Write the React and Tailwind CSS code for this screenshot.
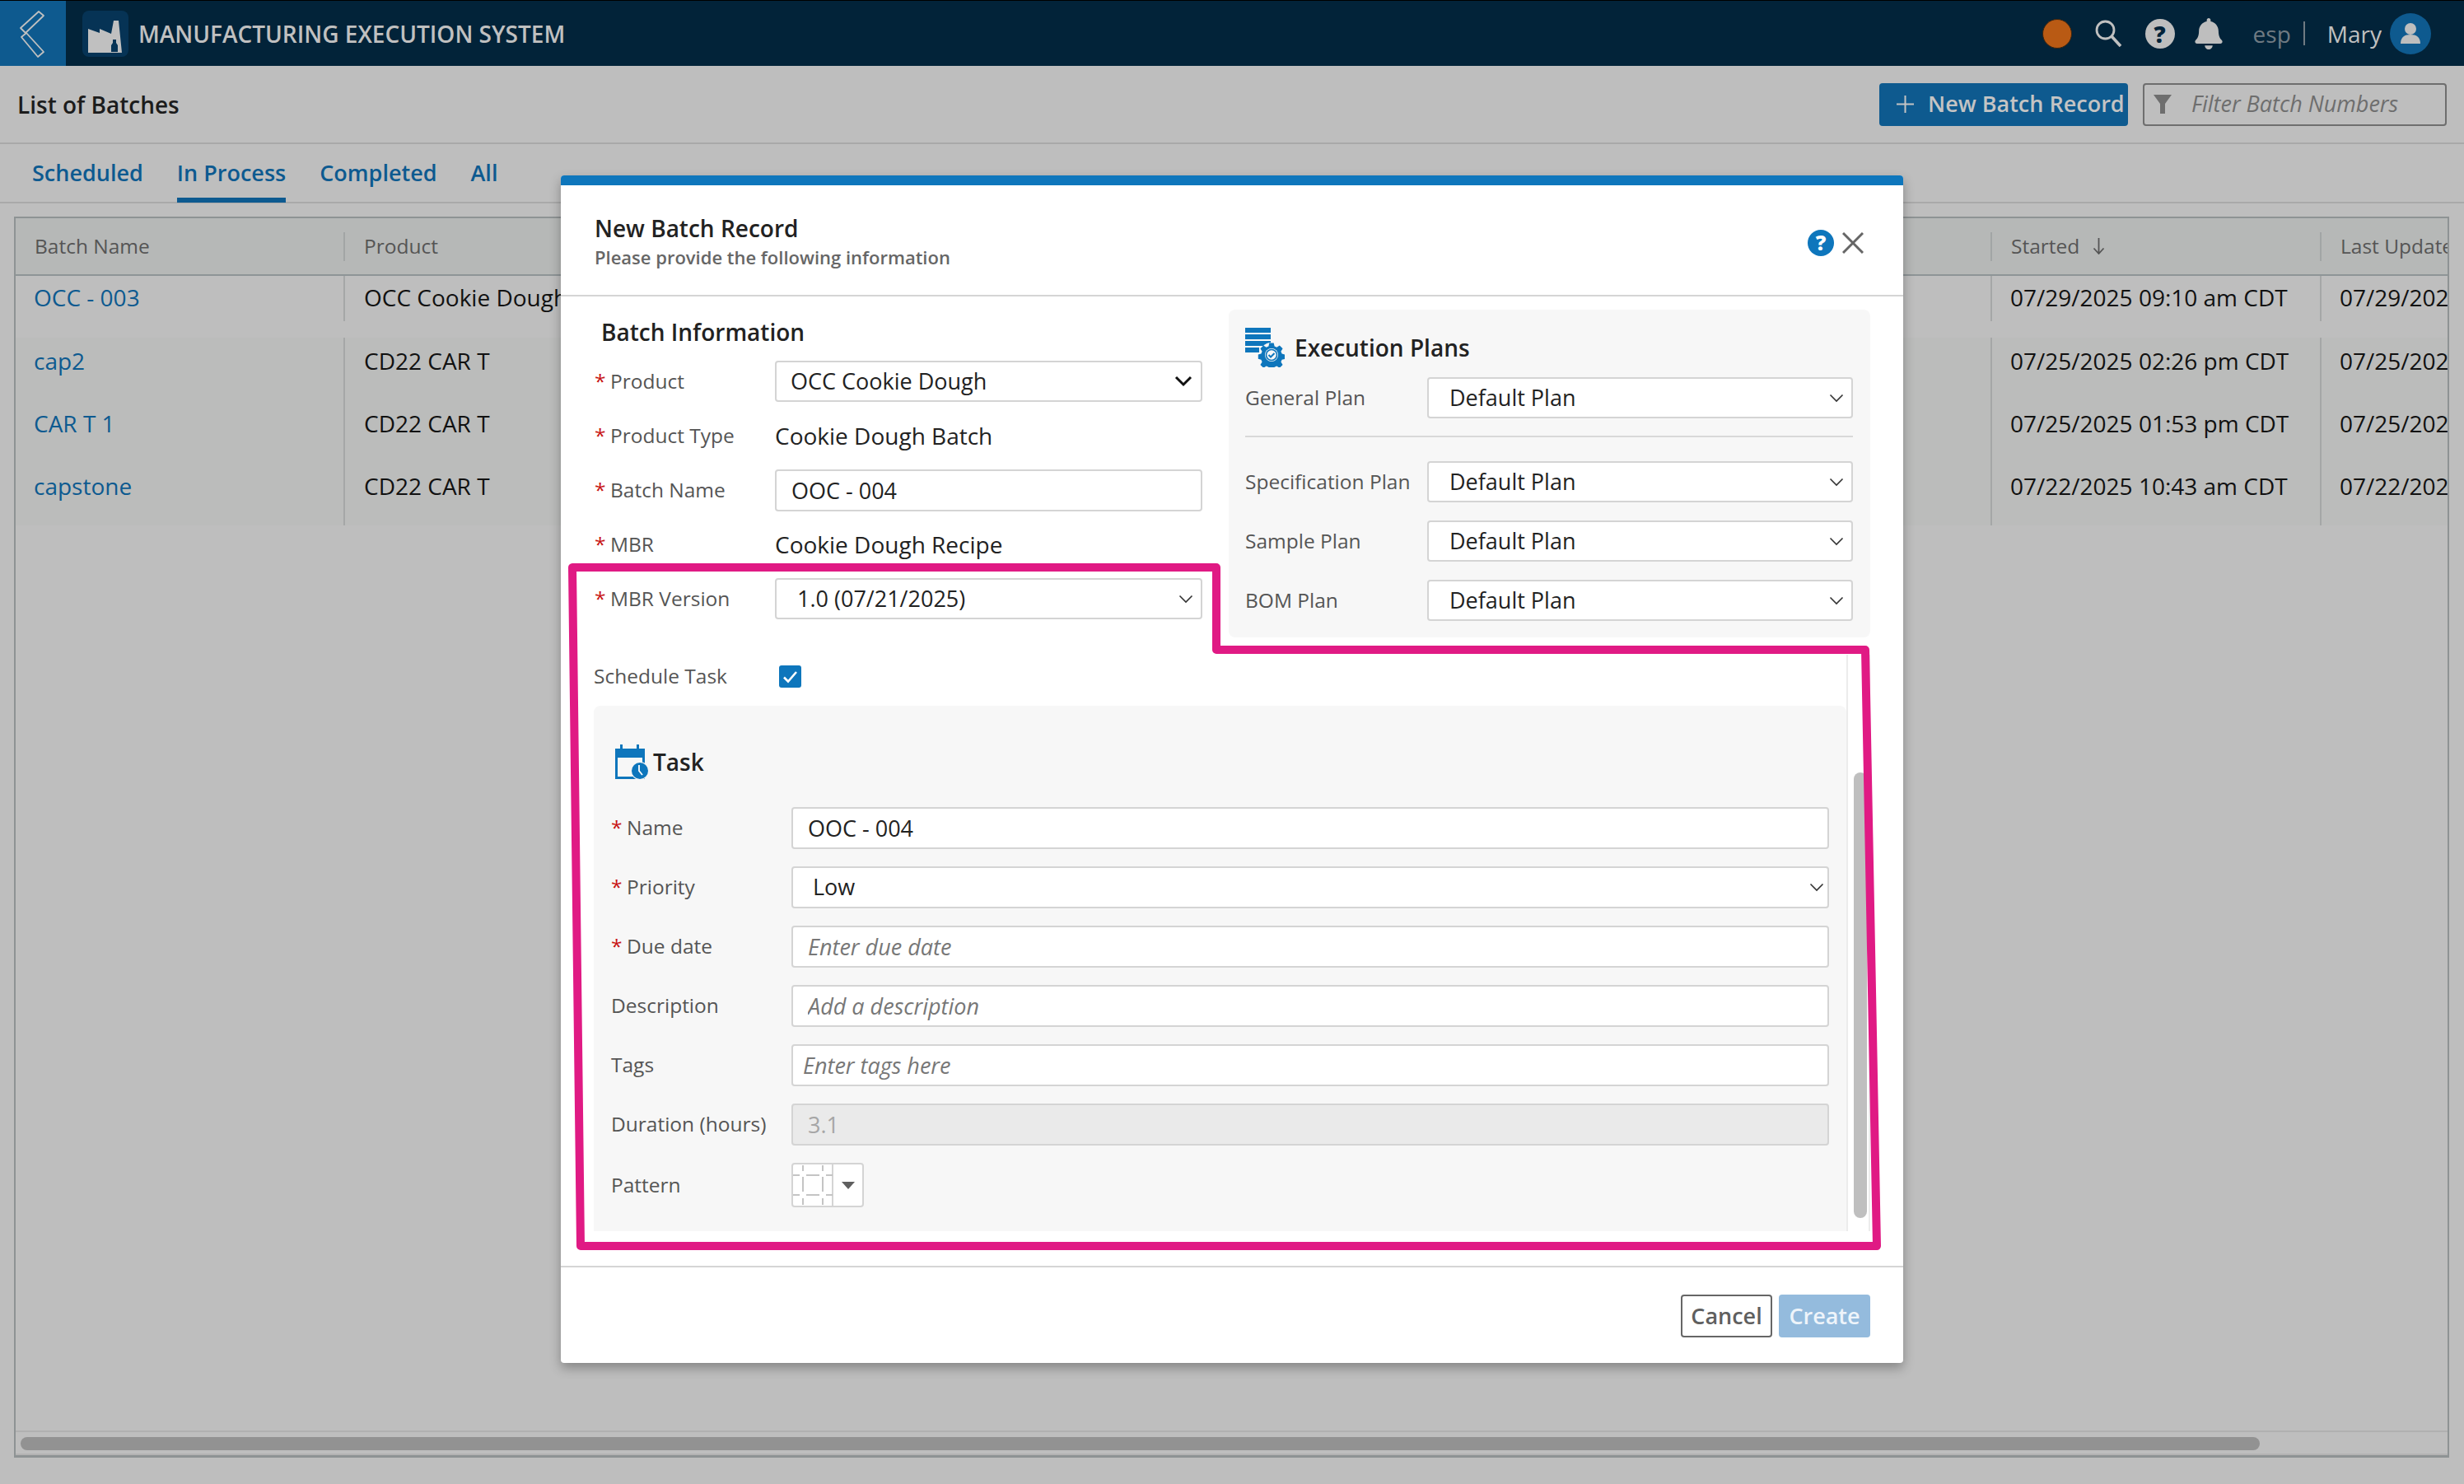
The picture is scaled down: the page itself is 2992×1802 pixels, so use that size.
import React from "react";
import { FaBell } from "react-icons/fa";

const Chevron = ({ bold }) =>
  bold ? (
    <svg width="22" height="14" viewBox="0 0 22 14" className="shrink-0">
      <path d="M2 2 L11 11 L20 2" fill="none" stroke="#111" strokeWidth="3" />
    </svg>
  ) : (
    <svg width="18" height="11" viewBox="0 0 18 11" className="shrink-0">
      <path d="M1.5 1.5 L9 9 L16.5 1.5" fill="none" stroke="#333" strokeWidth="1.6" />
    </svg>
  );

const Req = () => <span className="inline-block w-[19px] text-[#c81414]">*</span>;

const Label = ({ req, w, children }) => (
  <div className={`${w} shrink-0 text-[24.5px] text-[#555] whitespace-nowrap`}>
    {req && <Req />}
    {children}
  </div>
);

const Select = ({ children, bold, h = "h-[50px]", pl = "pl-[25px]", pr = "pr-[9px]" }) => (
  <div className={`flex-1 ${h} ${pl} ${pr} flex items-center justify-between bg-white border-2 border-[#d4d4d4] rounded-[4px] text-[27px] text-[#222]`}>
    <span>{children}</span>
    <Chevron bold={bold} />
  </div>
);

const Field = ({ value, placeholder, pl = "pl-[18px]", disabled }) => (
  <input
    readOnly
    disabled={disabled}
    defaultValue={value}
    placeholder={placeholder}
    className={`flex-1 min-w-0 h-[51px] ${pl} border-2 border-[#d4d4d4] rounded-[4px] text-[27px] outline-none placeholder:italic placeholder:text-[#777] ${
      disabled ? "bg-[#eaeaea] text-[#a6a6a6]" : "bg-white text-[#222]"
    }`}
  />
);

const Row = ({ children, className = "" }) => <div className={`flex items-center ${className}`}>{children}</div>;

const TableRow = ({ name, product, date, update, h, lh }) => (
  <div className={`grid grid-cols-[398px_2000px_400px_1fr] ${h} ${lh} text-[28px] text-[#111] whitespace-nowrap`}>
    <div className="pl-[22px] text-[#0d5a90]">{name}</div>
    <div className="pl-[23px] border-l-2 border-[#a5a7a7]">{product}</div>
    <div className="pl-[22px] border-l-2 border-[#a5a7a7]">{date}</div>
    <div className="pl-[22px] border-l-2 border-[#a5a7a7] overflow-hidden">{update}</div>
  </div>
);

const HeadCell = ({ children, first, extra }) => (
  <div className="flex items-center overflow-hidden whitespace-nowrap">
    {!first && <div className="w-[2px] h-[35px] bg-[#a2a5a5] shrink-0" />}
    <span className={first ? "ml-[23px]" : "ml-[23px]"}>{children}</span>
    {extra}
  </div>
);

const ExecIcon = () => (
  <svg width="48" height="48" viewBox="0 0 48 48" className="shrink-0">
    <g fill="#0e76bc">
      <rect x="0" y="0" width="31" height="6" />
      <rect x="0" y="8" width="31" height="6" />
      <rect x="0" y="16" width="31" height="6" />
      <rect x="0" y="24" width="17" height="6" />
    </g>
    <g fill="#0e76bc" stroke="#f7f7f7" strokeWidth="0">
      <circle cx="32" cy="33" r="15" fill="#f7f7f7" />
      <path d="M29 17h6l1 4.4 3 1.3 3.9-2.4 4.2 4.2-2.4 3.9 1.3 3 4 1v6l-4 1-1.3 3 2.4 3.9-4.200 4.200-3.900-2.400-3 1.300-1 4h-6l-1-4-3-1.300-3.900 2.400-4.200-4.200 2.400-3.900-1.300-3-4-1v-6l4-1 1.300-3-2.400-3.900 4.200-4.200 3.900 2.400 3-1.300z" transform="translate(3.2 3.300) scale(0.9)" />
    </g>
    <circle cx="32" cy="33" r="8" fill="#f7f7f7" />
    <circle cx="32" cy="33" r="6.500" fill="none" stroke="#0e76bc" strokeWidth="1.600" />
    <path d="M28.500 33l2.500 2.500 4.500-4.500" fill="none" stroke="#0e76bc" strokeWidth="2" />
  </svg>
);

const TaskIcon = () => (
  <svg width="40" height="42" viewBox="0 0 40 42" className="shrink-0">
    <path fillRule="evenodd" fill="#0e76bc" d="M6 0h3v5h17V0h3v5h7v37H0V5h6zM3 16v23h30V16z" />
    <circle cx="30" cy="32" r="11" fill="#f7f7f7" />
    <circle cx="30" cy="32" r="10" fill="#0e76bc" />
    <path d="M29 25v7l4 5" fill="none" stroke="#fff" strokeWidth="1.800" />
  </svg>
);

export default function App() {
  return (
    <div className="relative w-[2992px] h-[1802px] overflow-hidden flex flex-col bg-[#bebebe] font-['Open_Sans',sans-serif]">
      {/* Top bar */}
      <header className="h-[80px] shrink-0 flex items-center bg-[#022339] border-t border-black">
        <div className="w-[80px] h-full bg-[#0e5a8f] flex items-center justify-center">
          <svg width="80" height="80" viewBox="0 0 80 80">
            <path d="M25 33 L47 13 L53 18 L31 39 Z M26 44 L32 39 L53 62 L46 68 Z" fill="none" stroke="#c0c0c0" strokeWidth="1.800" strokeLinejoin="round" />
          </svg>
        </div>
        <div className="ml-[20px] w-[56px] h-[56px] rounded-[8px] bg-[#063355]">
          <svg width="56" height="56" viewBox="0 0 56 56">
            <path d="M7 22 L21 27 L21 22 L35 28 L38 12 L44 12 L48 51 L7 51 Z" fill="#c0c0c0" />
            <path d="M37 35h4v4l2 3v8h-8v-8l2-3z" fill="#063355" />
          </svg>
        </div>
        <div className="ml-[12px] text-[28px] font-semibold text-[#c0c0c0] whitespace-nowrap">MANUFACTURING EXECUTION SYSTEM</div>
        <div className="ml-auto pr-[40px] flex items-center">
          <div className="w-[36px] h-[36px] rounded-full bg-[#b95a14] border border-[#3a2410]" />
          <svg className="ml-[28px]" width="33" height="33" viewBox="0 0 33 33">
            <circle cx="12.500" cy="12.500" r="10.500" fill="none" stroke="#c0c0c0" strokeWidth="2.800" />
            <path d="M20 20 L31 32" stroke="#c0c0c0" strokeWidth="3.600" />
          </svg>
          <div className="ml-[28px] w-[36px] h-[36px] rounded-full bg-[#bebebe] flex items-center justify-center text-[28px] font-extrabold text-[#022339]">?</div>
          <FaBell className="ml-[22px] text-[#bebebe] text-[38px]" />
          <span className="ml-[35px] text-[28px] text-[#6f7a82]">esp</span>
          <div className="ml-[15px] w-[2px] h-[29px] bg-[#6f7a82]" />
          <span className="ml-[27px] text-[28px] text-[#c0c0c0]">Mary</span>
          <div className="ml-[10px] w-[50px] h-[50px] rounded-full bg-[#0e5a8f]">
            <svg width="50" height="50" viewBox="0 0 50 50">
              <circle cx="25" cy="19" r="7" fill="#bebebe" />
              <path d="M13 37c0-8 5-11 12-11s12 3 12 11z" fill="#bebebe" />
            </svg>
          </div>
        </div>
      </header>

      {/* Page heading */}
      <div className="h-[95px] shrink-0 pl-[21px] pr-[21px] flex items-center justify-between border-b-2 border-[#a9a9a9]">
        <div className="text-[28px] font-semibold text-[#1c1c1c]">List of Batches</div>
        <div className="flex items-center gap-[18px]">
          <button className="w-[302px] h-[52px] rounded-[4px] bg-[#0e5a8f] flex items-center pl-[21px] text-[27px] font-semibold text-[#c4c4c4] whitespace-nowrap">
            <svg width="21" height="21" viewBox="0 0 21 21" className="mr-[17px]">
              <path d="M10.500 0v21M0 10.500h21" stroke="#c4c4c4" strokeWidth="2" />
            </svg>
            New Batch Record
          </button>
          <div className="w-[369px] h-[52px] rounded-[4px] border-2 border-[#6e6e6e] flex items-center pl-[11px] text-[27px] italic text-[#6e6e6e] whitespace-nowrap">
            <svg width="22" height="23" viewBox="0 0 22 23" className="mr-[24px]">
              <path d="M0 0h22L14 11v12H8V11z" fill="#6e6e6e" />
            </svg>
            Filter Batch Numbers
          </div>
        </div>
      </div>

      {/* Tabs */}
      <nav className="h-[72px] shrink-0 pl-[39px] flex gap-[41px] border-b-2 border-[#a9a9a9] text-[27px] font-semibold text-[#0d5a90]">
        <div className="h-[71px] pt-[5px] flex items-center border-b-[6px] border-transparent">Scheduled</div>
        <div className="h-[71px] pt-[5px] flex items-center border-b-[6px] border-[#0d5a90]">In Process</div>
        <div className="h-[71px] pt-[5px] flex items-center border-b-[6px] border-transparent">Completed</div>
        <div className="h-[71px] pt-[5px] flex items-center border-b-[6px] border-transparent">All</div>
      </nav>

      {/* Table */}
      <div className="mt-[16px] ml-[17px] w-[2957px] mb-[32px] flex-1 flex flex-col border-2 border-b-[3px] border-[#8e9394] overflow-hidden">
        <div className="h-[70px] shrink-0 grid grid-cols-[398px_2000px_400px_1fr] bg-[#b6b8b7] border-b-2 border-[#8e9597] text-[24.500px] font-medium text-[#555]">
          <HeadCell first>Batch Name</HeadCell>
          <HeadCell>Product</HeadCell>
          <HeadCell
            extra={
              <svg width="15" height="20" viewBox="0 0 15 20" className="ml-[16px] shrink-0">
                <path d="M7.500 0v19M1.500 12.500l6 6.500 6-6.500" fill="none" stroke="#555" strokeWidth="1.800" />
              </svg>
            }
          >
            Started
          </HeadCell>
          <HeadCell>Last Updated</HeadCell>
        </div>
        <div className="mb-[20px]">
          <TableRow name="OCC - 003" product="OCC Cookie Dough" date="07/29/2025 09:10 am CDT" update="07/29/2025 09:10 am CDT" h="h-[55px]" lh="leading-[52px]" />
        </div>
        <div className="bg-[#bbbcbb]">
          <TableRow name="cap2" product="CD22 CAR T" date="07/25/2025 02:26 pm CDT" update="07/25/2025 02:26 pm CDT" h="h-[76px]" lh="leading-[56px]" />
          <TableRow name="CAR T 1" product="CD22 CAR T" date="07/25/2025 01:53 pm CDT" update="07/25/2025 01:53 pm CDT" h="h-[76px]" lh="leading-[56px]" />
          <TableRow name="capstone" product="CD22 CAR T" date="07/22/2025 10:43 am CDT" update="07/22/2025 10:43 am CDT" h="h-[76px]" lh="leading-[56px]" />
        </div>
        <div className="flex-1" />
        <div className="h-[30px] shrink-0 border-t-2 border-b-2 border-t-[#b0b0b0] border-b-[#b3b3b3] pt-[6px] pl-[6px]">
          <div className="w-[2719px] h-[16px] rounded-[8px] bg-[#929292]" />
        </div>
      </div>

      {/* Modal */}
      <div className="absolute left-[681px] top-[213px] w-[1630px] h-[1442px] flex flex-col bg-white rounded-[4px] shadow-[0_6px_14px_rgba(0,0,0,0.3)] overflow-hidden">
        <div className="h-[12px] shrink-0 bg-[#0e76bc]" />
        <div className="h-[135px] shrink-0 pl-[41px] pr-[48px] flex items-center justify-between border-b-2 border-[#d5d5d5]">
          <div className="pt-[2px]">
            <div className="text-[28px] font-semibold text-[#222] leading-[38px]">New Batch Record</div>
            <div className="text-[22px] font-semibold text-[#666] leading-[32px]">Please provide the following information</div>
          </div>
          <div className="flex items-center gap-[10px] mt-[7px]">
            <div className="w-[32px] h-[32px] rounded-full bg-[#0e76bc] flex items-center justify-center text-[25px] font-extrabold text-white">?</div>
            <svg width="26" height="26" viewBox="0 0 26 26">
              <path d="M1 1 L25 25 M25 1 L1 25" stroke="#666" strokeWidth="3" />
            </svg>
          </div>
        </div>

        <div className="flex-1 flex flex-col pt-[16px]">
          <div className="h-[419px] shrink-0 pl-[41px] flex items-start">
            {/* Batch information */}
            <div className="w-[738px] shrink-0">
              <div className="h-[54px] mb-[8px] pl-[8px] flex items-center text-[28px] font-semibold text-[#222]">Batch Information</div>
              <div className="flex flex-col gap-[16px]">
                <Row className="h-[50px]">
                  <Label req w="w-[219px]">Product</Label>
                  <Select bold pl="pl-[17px]" pr="pr-[10px]">OCC Cookie Dough</Select>
                </Row>
                <Row className="h-[50px]">
                  <Label req w="w-[219px]">Product Type</Label>
                  <div className="text-[28px] text-[#222]">Cookie Dough Batch</div>
                </Row>
                <Row className="h-[50px]">
                  <Label req w="w-[219px]">Batch Name</Label>
                  <Field value="OOC - 004" />
                </Row>
                <Row className="h-[50px]">
                  <Label req w="w-[219px]">MBR</Label>
                  <div className="text-[28px] text-[#222]">Cookie Dough Recipe</div>
                </Row>
                <Row className="h-[50px]">
                  <Label req w="w-[219px]">MBR Version</Label>
                  <Select>1.0 (07/21/2025)</Select>
                </Row>
              </div>
            </div>
            {/* Execution plans */}
            <div className="ml-[32px] w-[779px] h-[398px] pt-[22px] pl-[20px] pr-[21px] bg-[#f7f7f7] rounded-[8px]">
              <div className="flex items-center gap-[12px] mb-[12px]">
                <ExecIcon />
                <div className="text-[28px] font-semibold text-[#222]">Execution Plans</div>
              </div>
              <Row>
                <Label w="w-[221px]">General Plan</Label>
                <Select>Default Plan</Select>
              </Row>
              <div className="h-[2px] mt-[21px] mb-[29px] bg-[#d8d8d8]" />
              <div className="flex flex-col gap-[22px]">
                <Row>
                  <Label w="w-[221px]">Specification Plan</Label>
                  <Select>Default Plan</Select>
                </Row>
                <Row>
                  <Label w="w-[221px]">Sample Plan</Label>
                  <Select>Default Plan</Select>
                </Row>
                <Row>
                  <Label w="w-[221px]">BOM Plan</Label>
                  <Select>Default Plan</Select>
                </Row>
              </div>
            </div>
          </div>

          {/* Scroll area */}
          <div className="h-[700px] shrink-0 ml-[40px] w-[1550px] flex">
            <div className="w-[1521px] shrink-0 flex flex-col">
              <div className="h-[40px] mt-[13px] mb-[9px] flex items-start">
                <div className="w-[225px] text-[24.500px] text-[#555] leading-[26px]">Schedule Task</div>
                <div className="w-[27px] h-[27px] rounded-[3px] bg-[#0e76bc] flex items-center justify-center">
                  <svg width="19" height="16" viewBox="0 0 19 16">
                    <path d="M2 8.500 L7 13.500 L17 2" fill="none" stroke="#fff" strokeWidth="2.600" />
                  </svg>
                </div>
              </div>
              <div className="flex-1 px-[21px] pt-[47px] bg-[#f7f7f7] rounded-tl-[8px] rounded-tr-[8px]">
                <div className="flex items-center gap-[6px] pl-[5px] mb-[34px]">
                  <TaskIcon />
                  <div className="text-[28px] font-semibold text-[#222]">Task</div>
                </div>
                <div className="flex flex-col gap-[21px]">
                  <Row><Label req w="w-[219px]">Name</Label><Field value="OOC - 004" /></Row>
                  <Row><Label req w="w-[219px]">Priority</Label><Select h="h-[51px]" pl="pl-[24px]" pr="pr-[4px]">Low</Select></Row>
                  <Row><Label req w="w-[219px]">Due date</Label><Field placeholder="Enter due date" /></Row>
                  <Row><Label w="w-[219px]">Description</Label><Field placeholder="Add a description" /></Row>
                  <Row><Label w="w-[219px]">Tags</Label><Field placeholder="Enter tags here" pl="pl-[12px]" /></Row>
                  <Row><Label w="w-[219px]">Duration (hours)</Label><Field value="3.1" disabled /></Row>
                  <Row>
                    <Label w="w-[219px]">Pattern</Label>
                    <div className="w-[88px] h-[54px] flex bg-white border-2 border-[#d4d4d4] rounded-[4px]">
                      <div className="w-[49px] border-r-2 border-[#d4d4d4]">
                        <svg width="49" height="50" viewBox="0 0 49 50">
                          <path d="M12 1v7M12 15v18M12 41v8M36 1v7M36 15v18M36 41v8M0 13h8M16 13h16M40 13h8M0 37h8M16 37h16M40 37h8" stroke="#c4c4c4" strokeWidth="2" fill="none" />
                        </svg>
                      </div>
                      <div className="flex-1 flex items-center justify-center">
                        <svg width="16" height="9" viewBox="0 0 16 9">
                          <path d="M0 0h16L8 9z" fill="#5f5f5f" />
                        </svg>
                      </div>
                    </div>
                  </Row>
                </div>
              </div>
            </div>
            <div className="w-[29px] shrink-0 pl-[7px] pt-[143px] pb-[16px] border-l-2 border-r-2 border-[#ececec]">
              <div className="w-[16px] h-full rounded-[8px] bg-[#bfbfbf]" />
            </div>
          </div>
        </div>

        <div className="h-[118px] shrink-0 mt-[40px] pr-[40px] pt-[33px] flex justify-end gap-[8px] border-t-2 border-[#d5d5d5]">
          <button className="w-[111px] h-[52px] rounded-[4px] bg-white border-2 border-[#666] text-[27px] font-semibold text-[#5f5f5f]">Cancel</button>
          <button className="w-[111px] h-[52px] rounded-[4px] bg-[#94bbdd] text-[27px] font-semibold text-[#eef4fa]">Create</button>
        </div>
      </div>

      {/* Annotation */}
      <svg className="absolute left-0 top-0 pointer-events-none" width="2992" height="1802" viewBox="0 0 2992 1802">
        <path d="M695 689 H1477 V789 H2265 L2279 1513 H705 Z" fill="none" stroke="#e01a84" strokeWidth="10" strokeLinejoin="round" />
      </svg>
    </div>
  );
}
